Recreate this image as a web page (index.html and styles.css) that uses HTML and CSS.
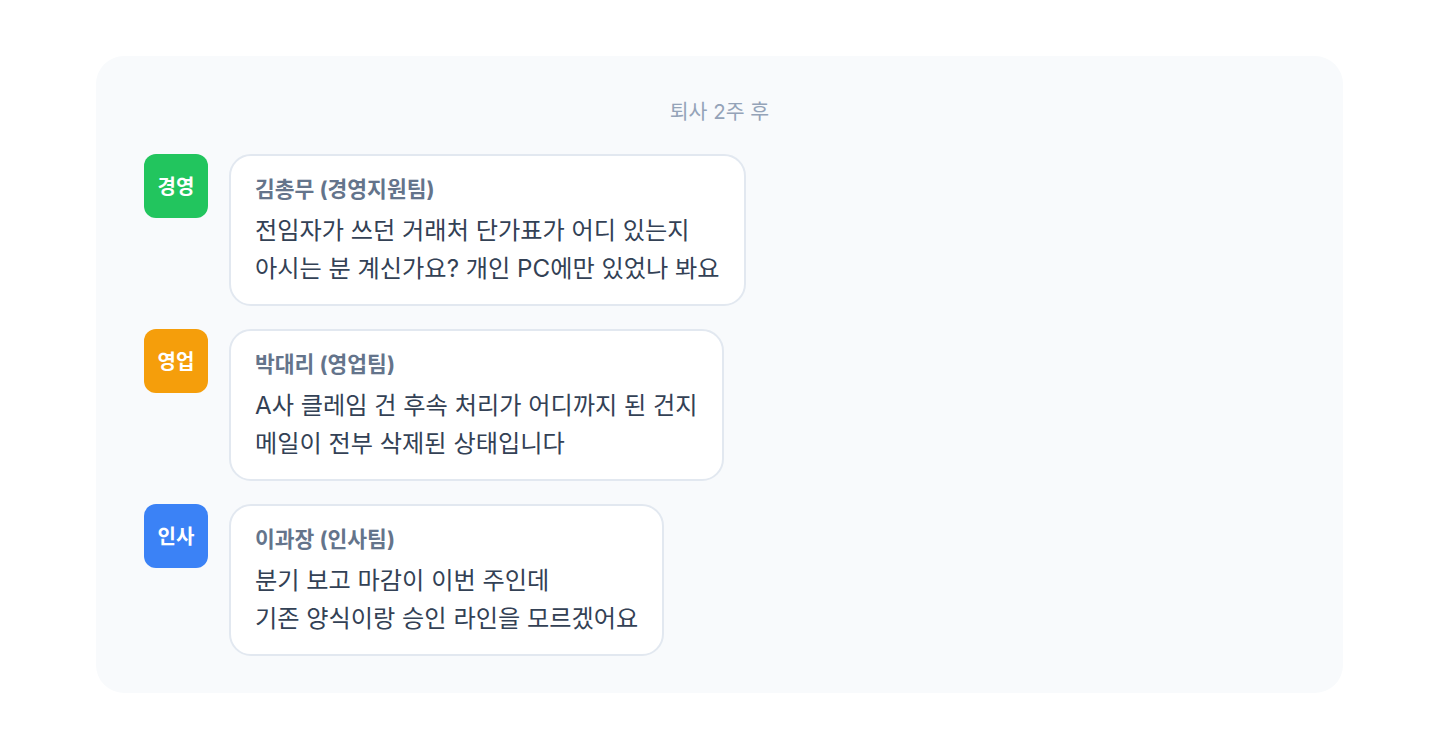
FILE: index.html
```html
<!DOCTYPE html>
<html lang="ko">
<head>
<meta charset="utf-8">
<link rel="stylesheet" href="styles.css">
</head>
<body>
<div class="panel">
  <div class="stamp">퇴사 2주 후</div>
  <div class="list">
    <div class="row">
      <div class="avatar green">경영</div>
      <div class="bubble">
        <div class="name">김총무 (경영지원팀)</div>
        <div class="msg">전임자가 쓰던 거래처 단가표가 어디 있는지<br>아시는 분 계신가요? 개인 PC에만 있었나 봐요</div>
      </div>
    </div>
    <div class="row">
      <div class="avatar amber">영업</div>
      <div class="bubble">
        <div class="name">박대리 (영업팀)</div>
        <div class="msg">A사 클레임 건 후속 처리가 어디까지 된 건지<br>메일이 전부 삭제된 상태입니다</div>
      </div>
    </div>
    <div class="row">
      <div class="avatar blue">인사</div>
      <div class="bubble">
        <div class="name">이과장 (인사팀)</div>
        <div class="msg">분기 보고 마감이 이번 주인데<br>기존 양식이랑 승인 라인을 모르겠어요</div>
      </div>
    </div>
  </div>
</div>
</body>
</html>
```

FILE: styles.css
```css
html, body {
  margin: 0;
  padding: 0;
  background: #ffffff;
}
body {
  font-family: "Inter", "Noto Sans CJK KR", sans-serif;
  padding: 56px 97px 0 96px;
}
.panel {
  background: #f8fafc;
  border-radius: 28px;
  padding: 44px 48px 36px;
  height: 637px;
  box-sizing: border-box;
}
.stamp {
  text-align: center;
  color: #94a3b8;
  font-size: 20.5px;
  line-height: 24px;
  margin-bottom: 30px;
}
.list {
  display: flex;
  flex-direction: column;
  gap: 23px;
}
.row {
  display: flex;
  align-items: flex-start;
  gap: 21px;
}
.avatar {
  width: 64px;
  height: 64px;
  border-radius: 12px;
  flex: none;
  display: flex;
  align-items: center;
  justify-content: center;
  color: #fff;
  font-weight: 700;
  font-size: 20px;
  padding-bottom: 2px;
  box-sizing: border-box;
}
.green { background: #22c55e; }
.amber { background: #f59e0b; }
.blue { background: #3b82f6; }
.bubble {
  background: #fff;
  border: 2px solid #e2e8f0;
  border-radius: 22px;
  padding: 22px 24px 16px;
}
.name {
  font-size: 21.5px;
  font-weight: 700;
  color: #64748b;
  line-height: 22px;
  margin-bottom: 12px;
}
.msg {
  font-size: 24.2px;
  line-height: 38px;
  color: #334155;
}
```
